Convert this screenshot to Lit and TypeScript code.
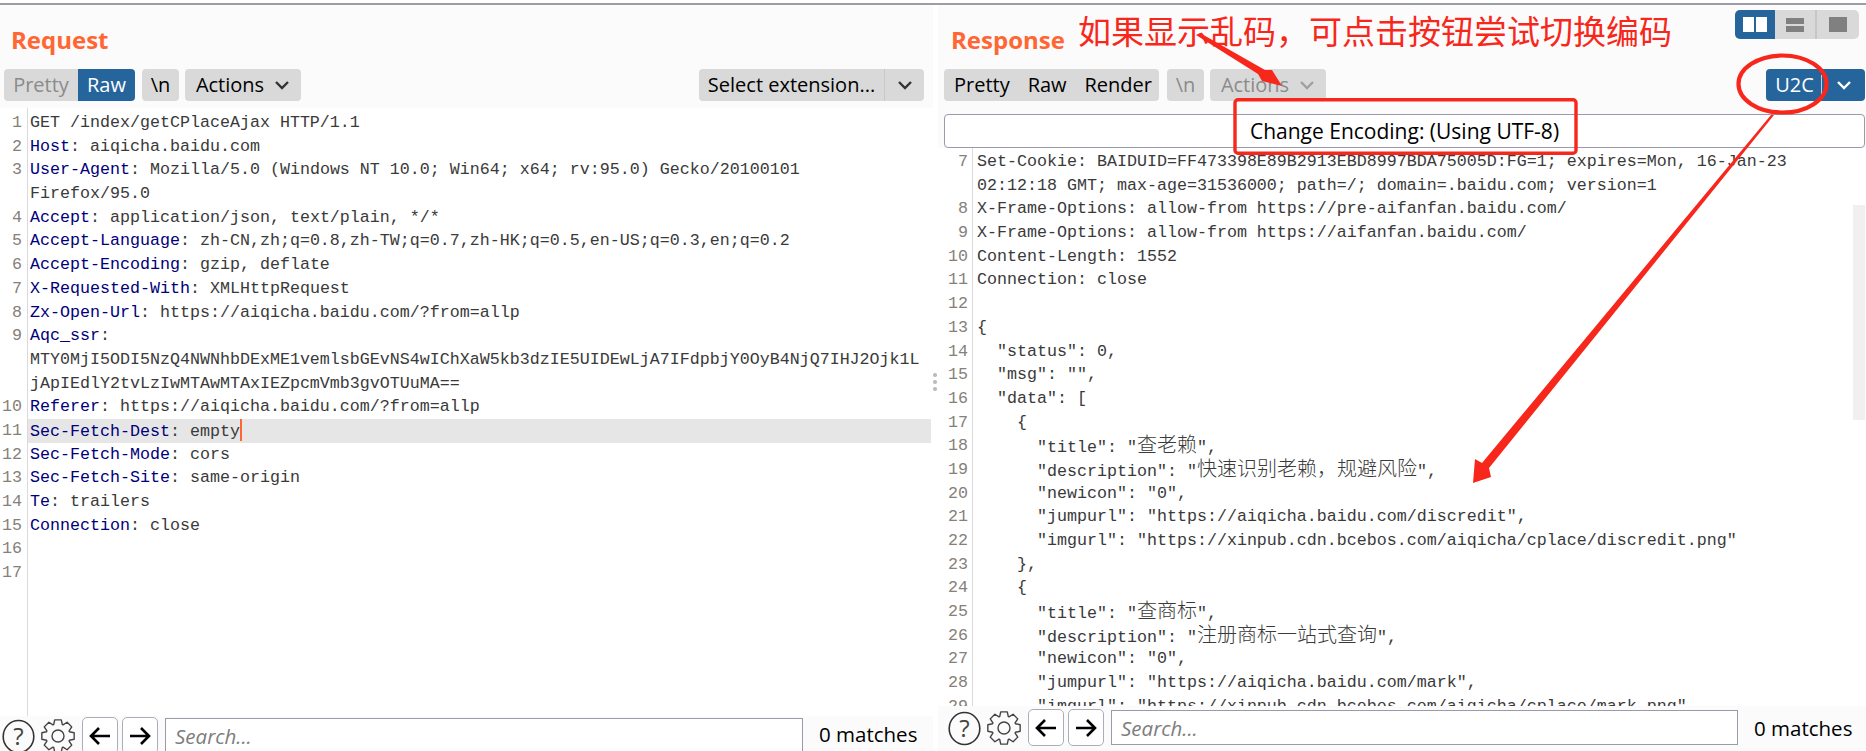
import { LitElement, html, css, svg } from "lit";
import { customElement } from "lit/decorators.js";

type Row = { n?: number; k?: string; t?: string; hl?: boolean };

const leftRows: Row[] = [
  { n: 1, t: "GET /index/getCPlaceAjax HTTP/1.1" },
  { n: 2, k: "Host", t: ": aiqicha.baidu.com" },
  { n: 3, k: "User-Agent", t: ": Mozilla/5.0 (Windows NT 10.0; Win64; x64; rv:95.0) Gecko/20100101" },
  { t: "Firefox/95.0" },
  { n: 4, k: "Accept", t: ": application/json, text/plain, */*" },
  { n: 5, k: "Accept-Language", t: ": zh-CN,zh;q=0.8,zh-TW;q=0.7,zh-HK;q=0.5,en-US;q=0.3,en;q=0.2" },
  { n: 6, k: "Accept-Encoding", t: ": gzip, deflate" },
  { n: 7, k: "X-Requested-With", t: ": XMLHttpRequest" },
  { n: 8, k: "Zx-Open-Url", t: ": https://aiqicha.baidu.com/?from=allp" },
  { n: 9, k: "Aqc_ssr", t: ":" },
  { t: "MTY0MjI5ODI5NzQ4NWNhbDExME1vemlsbGEvNS4wIChXaW5kb3dzIE5UIDEwLjA7IFdpbjY0OyB4NjQ7IHJ2Ojk1L" },
  { t: "jApIEdlY2tvLzIwMTAwMTAxIEZpcmVmb3gvOTUuMA==" },
  { n: 10, k: "Referer", t: ": https://aiqicha.baidu.com/?from=allp" },
  { n: 11, k: "Sec-Fetch-Dest", t: ": empty", hl: true },
  { n: 12, k: "Sec-Fetch-Mode", t: ": cors" },
  { n: 13, k: "Sec-Fetch-Site", t: ": same-origin" },
  { n: 14, k: "Te", t: ": trailers" },
  { n: 15, k: "Connection", t: ": close" },
  { n: 16, t: "" },
  { n: 17, t: "" },
];

const rightRows: Row[] = [
  { n: 7, t: "Set-Cookie: BAIDUID=FF473398E89B2913EBD8997BDA75005D:FG=1; expires=Mon, 16-Jan-23" },
  { t: "02:12:18 GMT; max-age=31536000; path=/; domain=.baidu.com; version=1" },
  { n: 8, t: "X-Frame-Options: allow-from https://pre-aifanfan.baidu.com/" },
  { n: 9, t: "X-Frame-Options: allow-from https://aifanfan.baidu.com/" },
  { n: 10, t: "Content-Length: 1552" },
  { n: 11, t: "Connection: close" },
  { n: 12, t: "" },
  { n: 13, t: "{" },
  { n: 14, t: '  "status": 0,' },
  { n: 15, t: '  "msg": "",' },
  { n: 16, t: '  "data": [' },
  { n: 17, t: "    {" },
  { n: 18, t: '      "title": "查老赖",' },
  { n: 19, t: '      "description": "快速识别老赖，规避风险",' },
  { n: 20, t: '      "newicon": "0",' },
  { n: 21, t: '      "jumpurl": "https://aiqicha.baidu.com/discredit",' },
  { n: 22, t: '      "imgurl": "https://xinpub.cdn.bcebos.com/aiqicha/cplace/discredit.png"' },
  { n: 23, t: "    }," },
  { n: 24, t: "    {" },
  { n: 25, t: '      "title": "查商标",' },
  { n: 26, t: '      "description": "注册商标一站式查询",' },
  { n: 27, t: '      "newicon": "0",' },
  { n: 28, t: '      "jumpurl": "https://aiqicha.baidu.com/mark",' },
  { n: 29, t: '      "imgurl": "https://xinpub.cdn.bcebos.com/aiqicha/cplace/mark.png"' },
];

function gearPath(): string {
  const cx = 18, cy = 18, teeth = 8, ro = 16.5, ri = 12.2;
  const parts: string[] = [];
  for (let i = 0; i < teeth; i++) {
    const a = (i * 2 * Math.PI) / teeth - Math.PI / 2;
    const pts: [number, number][] = [
      [ri, a - 0.36],
      [ro, a - 0.2],
      [ro, a + 0.2],
      [ri, a + 0.36],
    ];
    for (const [r, t] of pts) {
      const x = (cx + r * Math.cos(t)).toFixed(2);
      const y = (cy + r * Math.sin(t)).toFixed(2);
      parts.push(`${parts.length ? "L" : "M"}${x} ${y}`);
    }
  }
  return parts.join(" ") + " Z";
}

const chevron = (color: string) => html`<svg class="chev" viewBox="0 0 16 10" style="color:${color}"><path d="M2 2 L8 8 L14 2" fill="none" stroke="currentColor" stroke-width="2.4"/></svg>`;

@customElement("app-root")
export class AppRoot extends LitElement {
  static styles = css`
    :host {
      display: block;
      width: 1866px;
      height: 751px;
      overflow: hidden;
      position: relative;
      background: #fff;
      font-family: "Open Sans", "Noto Sans", sans-serif;
    }
    .topline { height: 2px; margin-top: 3px; background: #9d9daa; }
    .frame {
      display: grid;
      grid-template-columns: 933px 5px 928px;
      height: 746px;
    }
    .pane { display: flex; flex-direction: column; min-width: 0; overflow: hidden; background: #fbfbfb; }
    .head { height: 64px; flex: none; display: flex; align-items: flex-start; }
    .title { color: #ff6633; font-weight: 700; font-size: 24px; line-height: 28px; margin-top: 21px; }
    .left .title { margin-left: 11px; }
    .right .title { margin-left: 13px; }
    .tools { display: flex; height: 32px; flex: none; font-size: 20px; }
    .left .tools { padding: 0 9px 0 4px; }
    .right .tools { padding: 0 1px 0 6px; }
    .tools .spacer { flex: 1; }
    .btn {
      display: flex; align-items: center; justify-content: center;
      background: #d9d9d9; color: #000; border-radius: 4px; height: 32px;
      white-space: nowrap; box-sizing: border-box; padding-bottom: 1px;
    }
    .btn.dim { color: #8b8b8b; }
    .btn.blue { background: #26649c; color: #fff; }
    .seg { display: flex; }
    .seg .btn { border-radius: 0; }
    .seg .btn:first-child { border-radius: 4px 0 0 4px; }
    .seg .btn:last-child { border-radius: 0 4px 4px 0; }
    .chev { width: 16px; height: 10px; display: block; margin-top: 1px; }
    .lpretty { width: 74px; }
    .lraw { width: 57px; }
    .ln1 { width: 37px; margin-left: 7px; }
    .lact { width: 116px; margin-left: 6px; gap: 10px; }
    .lsel { width: 185px; }
    .lselc { width: 40px; border-left: 1px solid #c8c8c8; }
    .rgroup { width: 215px; background: #d9d9d9; border-radius: 4px; justify-content: space-between; padding: 0 7px 1px 10px; }
    .rn { width: 37px; margin-left: 8px; }
    .ract { width: 116px; margin-left: 6px; gap: 10px; }
    .ru2c { width: 57px; position: relative; }
    .ru2c::after { content: ""; position: absolute; right: 1px; top: 6px; bottom: 6px; width: 1px; background: #bcd0e2; }
    .ru2cc { width: 42px; }
    .gap7 { height: 7px; flex: none; }
    .enc {
      flex: none; height: 34px; margin: 13px 1px 0 6px; box-sizing: border-box;
      background: #fff; border: 1px solid #9a9aac; border-radius: 4px;
      display: flex; align-items: center; justify-content: center;
      font-size: 21px; color: #000; white-space: nowrap;
    }
    .code {
      flex: 1; min-height: 0; overflow: hidden; position: relative;
      font-family: "Liberation Mono", "Noto Sans CJK SC", monospace;
      font-size: 16.67px; color: #3a3a3a;
      background: linear-gradient(#dadada, #dadada) no-repeat, #fff;
      background-size: 1px 100%;
    }
    .left .code { padding-top: 3px; background-position: 27px 0, 0 0; }
    .right .code { padding-top: 2px; background-position: 34px 0, 0 0; }
    .row { display: flex; height: 23.7px; line-height: 23.7px; white-space: pre; }
    .no { flex: none; box-sizing: border-box; text-align: right; color: #86807a; }
    .left .no { width: 28px; padding-right: 6px; }
    .right .no { width: 35px; padding-right: 5px; }
    .txt { flex: 1; min-width: 0; }
    .left .txt { padding-left: 2px; margin-right: 2px; }
    .right .txt { padding-left: 4px; }
    .row.hl .txt { background: #e6e6e6; }
    .key { color: #00007a; }
    .cjk { font-family: "Noto Sans CJK SC", sans-serif; font-size: 20px; line-height: 20px; font-weight: 300; }
    .caret { display: inline-block; width: 2px; height: 22px; background: #ff6633; vertical-align: -5px; }
    .scroll { position: absolute; right: 1px; top: 57px; width: 12px; height: 215px; background: #f0f0f0; }
    .bar { flex: none; display: flex; background: #fbfbfb; overflow: hidden; font-size: 20.5px; }
    .left .bar { height: 34px; padding: 1px 0 0 2px; }
    .right .bar { height: 42px; padding: 3px 0 0 10px; }
    .bar svg { flex: none; display: block; }
    .help { width: 33px; height: 36px; margin-top: 2px; }
    .gear { width: 36px; height: 36px; margin-left: 5px; margin-top: 1px; }
    .nav {
      flex: none; width: 36px; height: 37px; box-sizing: border-box; background: #fff;
      border: 1px solid #adadba; border-radius: 5px; margin-left: 4px;
      display: flex; align-items: center; justify-content: center;
    }
    .nav svg { width: 24px; height: 20px; }
    .nav.first { margin-left: 6px; }
    .search {
      flex: none; height: 35px; box-sizing: border-box; margin: 1px 0 0 7px;
      background: #fff; border: 1.5px solid #9a9aa8;
      display: flex; align-items: center; padding-left: 9px;
      color: #7d7d7d; font-style: italic; font-size: 20.5px;
    }
    .left .search { width: 638px; }
    .right .search { width: 627px; }
    .count { flex: none; color: #000; margin-left: 16px; line-height: 34px; white-space: nowrap; }
    .right .count { margin-top: 2px; }
    .divider { background: #fff; display: flex; align-items: flex-start; }
    .grip { margin-top: 368px; margin-left: 0; display: grid; gap: 3.5px; position: relative; z-index: 2; }
    .grip i { width: 3.5px; height: 3.5px; border-radius: 50%; background: #bcbcbc; display: block; }
    .toggle {
      position: absolute; left: 1735px; top: 10px; width: 124px; height: 29px;
      display: flex; border-radius: 5px; overflow: hidden; background: #d9d9d9;
    }
    .toggle div { display: flex; align-items: center; justify-content: center; box-sizing: border-box; }
    .t1 { width: 40px; background: #26649c; gap: 2px; }
    .t1 i { width: 11px; height: 15px; background: #fff; display: block; }
    .t2 { width: 42px; flex-direction: column; gap: 2px; border-right: 2px solid #c6c6c6; }
    .t2 i { width: 18px; height: 6px; background: #808080; display: block; }
    .t3 { flex: 1; }
    .t3 i { width: 18px; height: 15px; background: #808080; display: block; }
    .note {
      position: absolute; left: 1078px; top: 8px; font-family: "Noto Sans CJK SC", sans-serif;
      font-size: 33px; line-height: 44px; color: #f8271c; white-space: nowrap;
    }
    .over { position: absolute; left: 0; top: 0; pointer-events: none; }
  `;

  private renderText(text: string) {
    const parts = text.split(/([\u3000-\u9fff\uff00-\uffef]+)/);
    return parts.map((p, i) => (i % 2 ? html`<span class="cjk">${p}</span>` : p));
  }

  private renderRows(rows: Row[]) {
    return rows.map(
      (r) => html`<div class="row ${r.hl ? "hl" : ""}">
        <span class="no">${r.n ?? ""}</span>
        <span class="txt">${r.k ? html`<span class="key">${r.k}</span>` : ""}${this.renderText(r.t ?? "")}${r.hl ? html`<span class="caret"></span>` : ""}</span>
      </div>`
    );
  }

  private renderBar() {
    return html`<div class="bar">
      <svg class="help" viewBox="0 0 33 36">
        <ellipse cx="16.5" cy="17.5" rx="15.3" ry="16" fill="none" stroke="#333" stroke-width="1.6"/>
        <text x="16.5" y="26" text-anchor="middle" font-family="Open Sans" font-size="24" fill="#444">?</text>
      </svg>
      <svg class="gear" viewBox="0 0 36 36">
        <path d="${gearPath()}" fill="none" stroke="#444" stroke-width="1.4" stroke-linejoin="round"/>
        <circle cx="18" cy="18" r="6" fill="none" stroke="#444" stroke-width="1.4"/>
      </svg>
      <div class="nav first"><svg viewBox="0 0 24 20"><path d="M22 10 H3 M11 2 L3 10 L11 18" fill="none" stroke="#000" stroke-width="2.6"/></svg></div>
      <div class="nav"><svg viewBox="0 0 24 20"><path d="M2 10 H21 M13 2 L21 10 L13 18" fill="none" stroke="#000" stroke-width="2.6"/></svg></div>
      <div class="search">Search...</div>
      <div class="count">0 matches</div>
    </div>`;
  }

  render() {
    const dots = Array.from({ length: 3 }, () => html`<i></i>`);
    return html`
      <div class="topline"></div>
      <div class="frame">
        <section class="pane left">
          <div class="head"><div class="title">Request</div></div>
          <div class="tools">
            <div class="seg">
              <div class="btn dim lpretty">Pretty</div>
              <div class="btn blue lraw">Raw</div>
            </div>
            <div class="btn ln1">\\n</div>
            <div class="btn lact">Actions ${chevron("#333")}</div>
            <div class="spacer"></div>
            <div class="seg">
              <div class="btn lsel">Select extension...</div>
              <div class="btn lselc">${chevron("#333")}</div>
            </div>
          </div>
          <div class="gap7"></div>
          <div class="code">${this.renderRows(leftRows)}</div>
          ${this.renderBar()}
        </section>
        <div class="divider"><div class="grip">${dots}</div></div>
        <section class="pane right">
          <div class="head"><div class="title">Response</div></div>
          <div class="tools">
            <div class="btn rgroup"><span>Pretty</span><span>Raw</span><span>Render</span></div>
            <div class="btn dim rn">\\n</div>
            <div class="btn dim ract">Actions ${chevron("#a0a0a0")}</div>
            <div class="spacer"></div>
            <div class="seg">
              <div class="btn blue ru2c">U2C</div>
              <div class="btn blue ru2cc">${chevron("#fff")}</div>
            </div>
          </div>
          <div class="enc">Change Encoding: (Using UTF-8)</div>
          <div class="code">${this.renderRows(rightRows)}<div class="scroll"></div></div>
          ${this.renderBar()}
        </section>
      </div>
      <div class="toggle">
        <div class="t1"><i></i><i></i></div>
        <div class="t2"><i></i><i></i></div>
        <div class="t3"><i></i></div>
      </div>
      <div class="note">如果显示乱码，可点击按钮尝试切换编码</div>
      <svg class="over" width="1866" height="751" viewBox="0 0 1866 751">
        ${svg`
          <rect x="1235" y="99.7" width="341" height="53.6" rx="3" fill="none" stroke="#f8271c" stroke-width="3.4"/>
          <ellipse cx="1782.5" cy="84" rx="44" ry="28.5" fill="none" stroke="#f8271c" stroke-width="4.2"/>
          <polygon fill="#f8271c" points="1771,115 1774,115 1489,468 1491,477 1473,483 1475,459 1482,463"/>
          <polygon fill="#f8271c" points="1196,35 1200,33 1265,70 1272,70 1282,86 1262,81 1258,74"/>
        `}
      </svg>
    `;
  }
}
